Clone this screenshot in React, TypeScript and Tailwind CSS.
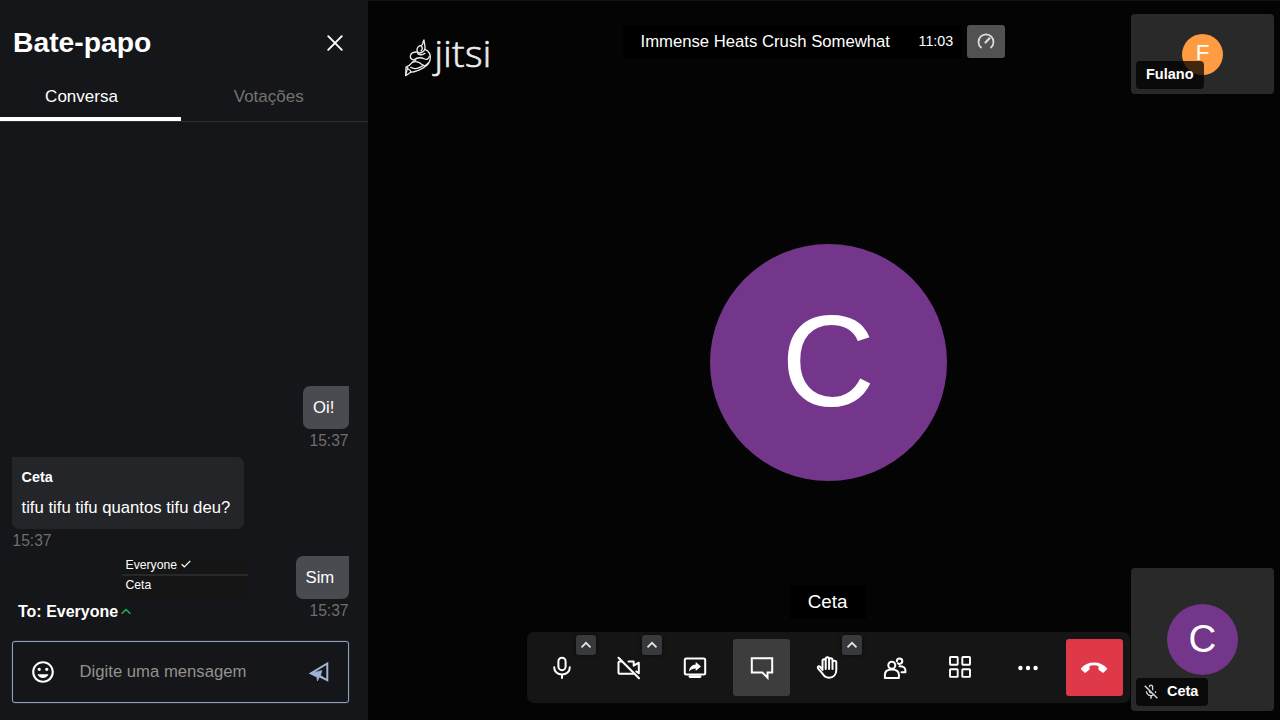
import React from "react";
import { MdOutlineMicOff, MdInsertEmoticon } from "react-icons/md";

function Emblem() {
  return (
    <svg className="block h-[40px] w-[30px] shrink-0" viewBox="46 54 90 120" fill="none" stroke="#ececec" strokeWidth="3.900" strokeLinecap="round" strokeLinejoin="round">
      <path d="M106 60c-5 6-1 11-7 16-7 1-14 6-14 14 0 6 4 9 9 9 8-1 15-8 15-16 0-8-2-13-3-23z" />
      <path d="M98 79c4 4 3 10-1 14M109 88c9 4 16 12 16 24 0 13-9 25-20 31-14 8-28 14-38 13l-16 11 1-26 10-5" />
      <path d="M84 96c-10 0-18 5-19 12-1 6 4 10 10 12M75 120c9-7 23-8 33-3 7 3 12-1 14-8M87 101c8 5 14 5 22-1M71 127c12-5 23 1 31 8 5 5 12 0 16-6" />
      <path d="M62 136c10-12 16-14 20-16M55 144c6 4 11 8 12 12M66 142c10 7 27 3 39-6M57 143l-6 22" />
    </svg>
  );
}

function Caret() {
  return (
    <span className="absolute -right-[5px] -top-[4px] flex h-[20px] w-[20px] items-center justify-center rounded-[3px] bg-[#37393d] shadow-[0_0_4px_rgba(0,0,0,0.6)]">
      <svg width="12" height="8" viewBox="0 0 12 8" fill="none" stroke="#e8e8e8" strokeWidth="1.7"><path d="M1.5 6.3 6 1.8l4.5 4.5" /></svg>
    </span>
  );
}

function Tool({ children, caret, tone = "" }: { children: React.ReactNode; caret?: boolean; tone?: string }) {
  return (
    <button className={"relative flex h-[57px] w-[57px] shrink-0 items-center justify-center rounded-[3px] text-white " + tone}>
      {children}
      {caret && <Caret />}
    </button>
  );
}

const line = { fill: "none", stroke: "#fff", strokeWidth: 2, strokeLinejoin: "round" as const, strokeLinecap: "round" as const };

function Toolbar() {
  return (
    <div className="flex h-[71px] w-[603px] items-center gap-[9.500px] rounded-[7px] bg-[#151515] pl-[6.500px]">
      <Tool caret>
        <svg width="24" height="24" viewBox="0 0 24 24" {...line} strokeWidth={2}>
          <rect x="8.400" y="1.700" width="7.200" height="12.500" rx="3.600" />
          <path d="M4.200 11.200c0 4.300 3.300 7.200 7.800 7.200s7.800-2.900 7.800-7.200M12 18.700v3.200" />
        </svg>
      </Tool>
      <Tool caret>
        <svg width="24" height="24" viewBox="0 0 24 24" {...line} strokeWidth={2}>
          <path d="M5 5.500H2.500c-.6 0-1 .4-1 1v10.300c0 .6.4 1 1 1h14M11.500 5.500h5.200v4.200l5.100-3v10.600l-2.500-1.800" />
          <path d="m1.500 1.800 20.500 20.400" strokeWidth="2.100" />
        </svg>
      </Tool>
      <Tool>
        <svg width="24" height="24" viewBox="0 0 24 24" {...line}>
          <rect x="1.800" y="2.600" width="20.400" height="16" rx="1.500" />
          <path d="M7 20.600h10" strokeWidth="2.800" />
          <path d="M6 15.500c.5-4.300 3-6.700 6.700-6.900V6l5.300 4.500-5.300 4.500v-2.600c-2.800 0-5 .8-6.700 3.100z" fill="#fff" stroke="none" />
        </svg>
      </Tool>
      <Tool tone="bg-[#3d3d3d]">
        <svg width="24" height="24" viewBox="0 0 24 24" {...line} strokeLinejoin="miter">
          <path d="M1.800 2.200h20.400v14.300h-4.700v5.200L12.300 16.500H1.800z" />
        </svg>
      </Tool>
      <Tool caret>
        <svg width="24" height="24" viewBox="1 0 24 24" {...line} strokeWidth={2} className="-translate-y-px">
          <path d="M7.500 15V6c0-2.200 3.200-2.200 3.200 0V3.800c0-2.200 3.400-2.200 3.400 0v1c0-2.200 3.400-2.200 3.400 0v2.400c0-2 3.800-2 3.800.2V15c0 4.600-3 7.700-7.200 7.700-3.200 0-5.400-1.800-6.800-4.400L3 13.300c-.8-1.900 1-2.800 2.300-1.300zM10.700 5v9M14.100 4v10M17.500 5v9" />
        </svg>
      </Tool>
      <Tool>
        <svg width="24" height="24" viewBox="0 0 24 24" {...line} strokeWidth={2}>
          <circle cx="8.800" cy="9.300" r="3.500" />
          <path d="M1.900 22h14v-3.200c0-3.500-2.500-5.300-7-5.300s-7 1.800-7 5.300z" />
          <path d="M13.800 5.300c0-1.900 1.100-2.900 2.700-2.900s2.800 1.200 2.800 2.700-1.200 2.800-2.800 2.800c-.8 0-1.300-.2-1.700-.6M16.500 10.200c3.700-.2 5.900 1.500 5.900 4.300v1.700h-3.900" />
        </svg>
      </Tool>
      <Tool>
        <svg width="24" height="24" viewBox="0 0 24 24" {...line} strokeWidth={1.900} className="-translate-x-px -translate-y-px">
          <rect x="2" y="2" width="7.700" height="7.700" rx=".6" />
          <rect x="14.300" y="2" width="7.700" height="7.700" rx=".6" />
          <rect x="2" y="14.200" width="7.700" height="7.700" rx=".6" />
          <rect x="14.300" y="14.200" width="7.700" height="7.700" rx=".6" />
        </svg>
      </Tool>
      <Tool>
        <svg width="24" height="24" viewBox="0 0 24 24" fill="#fff"><circle cx="4.400" cy="12" r="2.200" /><circle cx="12" cy="12" r="2.200" /><circle cx="19.600" cy="12" r="2.200" /></svg>
      </Tool>
      <Tool tone="bg-[#df3849]">
        <svg width="28" height="14" viewBox="0 0 28 14" fill="#fff"><path d="M14 1.400C8.800 1.400 4.200 3.300 1.200 7c-.4.500-.4 1 0 1.500l3.200 3.100c.4.400.9.400 1.400 0l3.200-2.500c.3-.2.500-.5.500-.9V5c2.800-1 6.200-1 9 0v3.200c0 .4.200.7.500.9l3.200 2.500c.5.400 1 .4 1.400 0l3.200-3.100c.4-.5.4-1 0-1.500-3-3.700-7.600-5.600-12.800-5.600z" /></svg>
      </Tool>
    </div>
  );
}

function Time({ right }: { right?: boolean }) {
  return <div className={"h-[22px] pt-px text-[15.600px] leading-[21px] text-[#6f6e6d] " + (right ? "text-right" : "pl-[.5px]")}>15:37</div>;
}

function Chat() {
  return (
    <aside className="flex h-full w-[367.500px] shrink-0 flex-col bg-[#141619]">
      <header className="flex h-[66px] items-center justify-between pl-[13px] pr-[23.500px] pt-[18px]">
        <h1 className="text-[28.300px] font-bold leading-[46px]">Bate-papo</h1>
        <svg width="18" height="18" viewBox="0 0 18 18" fill="none" stroke="#fff" strokeWidth="1.900" strokeLinecap="round" className="mt-[2px]"><path d="m2.200 2.200 13.600 13.600M15.800 2.200 2.200 15.800" /></svg>
      </header>
      <nav className="flex h-[56px] border-b border-[#2d2e30] text-[17px]">
        <div className="flex w-[181px] items-start justify-center border-b-[4px] border-white pr-[18px] pt-[19px] leading-[24px]">Conversa</div>
        <div className="flex flex-1 items-start justify-center pr-[11px] pt-[19px] leading-[24px] text-[#757371]">Votações</div>
      </nav>
      <div className="flex flex-1 flex-col justify-end pl-[12px] pr-[19px] text-[16.700px]">
        <div className="flex flex-col items-end">
          <div className="h-[43px] w-[45.500px] rounded-[7px] rounded-tr-none bg-[#4a4b50] pl-[10px] leading-[44px]">Oi!</div>
          <Time right />
        </div>
        <div className="mt-[5.500px] h-[72px] w-[232px] rounded-[7px] rounded-tl-none bg-[#242529] pl-[9.500px] pt-[9.500px]">
          <div className="text-[14.400px] font-bold leading-[23px]">Ceta</div>
          <div className="pt-[7px] leading-[24px]">tifu tifu tifu quantos tifu deu?</div>
        </div>
        <Time />
        <div className="mt-[5.500px] flex h-[65px] items-start justify-between">
          <div className="w-[240px]">
            <div className="ml-[110px] h-[44px] w-[126px] bg-[#151515] text-[12.200px]">
              <div className="flex h-[20px] items-center gap-[4px] border-b-2 border-[#26282b] pl-[3.500px] leading-[18px]">
                Everyone
                <svg width="10" height="8" viewBox="0 0 10 8" fill="none" stroke="#fff" strokeWidth="1.300" className="-mt-[3px]"><path d="m.7 4.300 2.600 2.600L9.300.9" /></svg>
              </div>
              <div className="pl-[3.500px] leading-[19px]">Ceta</div>
            </div>
            <div className="flex items-center gap-[3px] pl-[6px] text-[16px] font-bold leading-[23px]">
              To: Everyone
              <svg width="10" height="7" viewBox="0 0 10 7" fill="none" stroke="#22b564" strokeWidth="1.500"><path d="m.7 5.800 4.300-4.300 4.300 4.300" /></svg>
            </div>
          </div>
          <div className="flex flex-col items-end">
            <div className="h-[43px] w-[52.500px] rounded-[7px] rounded-tr-none bg-[#4a4b50] pl-[9.500px] leading-[43px]">Sim</div>
            <Time right />
          </div>
        </div>
      </div>
      <div className="mb-[17px] ml-[12px] mr-[19px] mt-[20px] flex h-[62px] shrink-0 items-center rounded-[3px] border border-[#8fa3bd] pl-[17px] pr-[18px] shadow-[0_0_1px_#8fa3bd]">
        <MdInsertEmoticon size={26} />
        <span className="ml-[23.500px] flex-1 text-[16.700px] text-[#94918d]">Digite uma mensagem</span>
        <svg width="22" height="22" viewBox="0 0 22 22" fill="none" stroke="#9fb3d6" strokeWidth="2" strokeLinejoin="miter"><path d="M9 15.300 2.800 12.300 19.300 2.500v16.700L12 15.500" /><path d="M2.500 12.300 14 9.500l-1.500 4.800 2.300 1.900-3.200-.4L9.400 20l-.6-4.300z" fill="#9fb3d6" strokeWidth=".6" /></svg>
      </div>
    </aside>
  );
}

function Stage() {
  return (
    <section className="flex w-[763.500px] shrink-0 flex-col">
      <header className="flex h-[84px] items-start">
        <div className="ml-[36px] flex w-[219px] pt-[38px]">
          <Emblem />
          <span className="-mt-[9px] pl-px font-['Open_Sans'] text-[37.500px] font-light leading-[48px] tracking-[0.300px] text-[#ececec] [-webkit-text-stroke:0.700px_#ececec]">jitsi</span>
        </div>
        <div className="mt-[24.500px] flex h-[34px] items-center">
          <div className="flex h-[34px] w-[339.500px] items-center bg-black pl-[18px] pt-[1px]">
            <span className="w-[278px] whitespace-nowrap text-[16.700px]">Immense Heats Crush Somewhat</span>
            <span className="text-[14.300px]">11:03</span>
          </div>
          <div className="ml-[5px] flex h-[33px] w-[38px] items-center justify-center rounded-[3px] bg-[#525252]">
            <svg width="18" height="17" viewBox="0 0 18 17" fill="none" stroke="#dedede" strokeWidth="1.700" strokeLinecap="round"><path d="M4 14.500A7.500 7.500 0 1 1 14 14.500" /><path d="M8.500 9.500 12.500 5.300" strokeWidth="2.200" /></svg>
          </div>
        </div>
      </header>
      <div className="ml-[342px] mt-[159.500px] flex h-[237.500px] w-[237.500px] items-center justify-center rounded-full bg-[#74368a] pb-[3px] text-[130px] leading-none">C</div>
      <div className="ml-[422px] mt-[104px] flex h-[34px] w-[76px] items-center justify-center bg-black text-[18.800px]">Ceta</div>
      <div className="ml-[159.500px] mt-[13px]"><Toolbar /></div>
    </section>
  );
}

function Filmstrip() {
  return (
    <section className="flex flex-1 flex-col justify-between pb-[9px] pt-[14px]">
      <div className="relative flex h-[80px] w-[143px] items-center justify-center rounded-[4px] bg-[#292929]">
        <div className="flex h-[41px] w-[41px] items-center justify-center rounded-full bg-[#ff9c42] pb-[1px] text-[22.500px] leading-none">F</div>
        <div className="absolute bottom-[5px] left-[5px] h-[28px] w-[68px] rounded-[4px] bg-black/75 pl-[10px] text-[14.500px] font-bold leading-[27px]">Fulano</div>
      </div>
      <div className="relative flex h-[143px] w-[143px] items-center justify-center rounded-[4px] bg-[#292929]">
        <div className="flex h-[71px] w-[71px] items-center justify-center rounded-full bg-[#74368a] pb-px text-[38.500px] leading-none">C</div>
        <div className="absolute bottom-[5px] left-[5px] flex h-[28px] w-[72px] items-center rounded-[4px] bg-black/75 pl-[6px] text-[14.500px] font-bold">
          <MdOutlineMicOff size={18} className="mr-[7px] text-[#d8d8d8]" />Ceta
        </div>
      </div>
    </section>
  );
}

export default function App() {
  return (
    <div className="flex h-[720px] w-[1280px] overflow-hidden bg-[#040404] font-['Liberation_Sans',sans-serif] text-white">
      <Chat />
      <main className="flex min-w-0 flex-1 shadow-[inset_0_1px_0_#151515]">
        <Stage />
        <Filmstrip />
      </main>
    </div>
  );
}
